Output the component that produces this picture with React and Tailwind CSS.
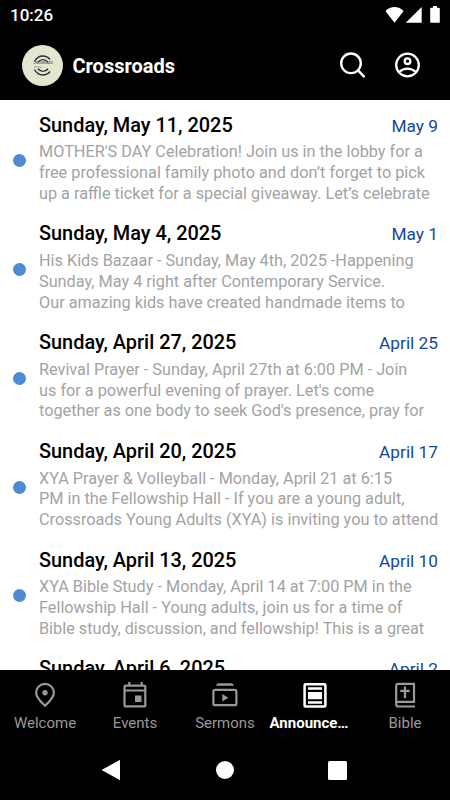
const announcements = [
  {
    title: 'Sunday, May 11, 2025',
    date: 'May 9',
    lines: [
      "MOTHER'S DAY Celebration! Join us in the lobby for a",
      'free professional family photo and don’t forget to pick',
      'up a raffle ticket for a special giveaway. Let’s celebrate',
    ],
  },
  {
    title: 'Sunday, May 4, 2025',
    date: 'May 1',
    lines: [
      'His Kids Bazaar - Sunday, May 4th, 2025 -Happening',
      'Sunday, May 4 right after Contemporary Service.',
      'Our amazing kids have created handmade items to',
    ],
  },
  {
    title: 'Sunday, April 27, 2025',
    date: 'April 25',
    lines: [
      'Revival Prayer - Sunday, April 27th at 6:00 PM - Join',
      "us for a powerful evening of prayer. Let's come",
      "together as one body to seek God's presence, pray for",
    ],
  },
  {
    title: 'Sunday, April 20, 2025',
    date: 'April 17',
    lines: [
      'XYA Prayer & Volleyball - Monday, April 21 at 6:15',
      'PM in the Fellowship Hall - If you are a young adult,',
      'Crossroads Young Adults (XYA) is inviting you to attend',
    ],
  },
  {
    title: 'Sunday, April 13, 2025',
    date: 'April 10',
    lines: [
      'XYA Bible Study - Monday, April 14 at 7:00 PM in the',
      'Fellowship Hall - Young adults, join us for a time of',
      'Bible study, discussion, and fellowship! This is a great',
    ],
  },
  { title: 'Sunday, April 6, 2025', date: 'April 2', lines: [] },
]

function StatusBar() {
  return (
    <div className="flex h-[30px] shrink-0 items-center justify-between px-[10px]">
      <span className="text-[17px] leading-[30px] font-medium">10:26</span>
      <svg width="56" height="30" viewBox="0 0 56 30" fill="currentColor">
        <path d="M1.500 11.200C4 8.400 7 7 10.500 7s6.500 1.400 9 4.200L10.500 22.800z" />
        <path d="M37.700 7v15.800H21.700z" />
        <path d="M49 6h4v1.800h2q.8 0 .8.8v13.400q0 .8-.8.8h-8q-.8 0-.8-.8V8.600q0-.8.8-.8h2z" />
      </svg>
    </div>
  )
}

function Logo() {
  return (
    <div className="relative size-[41px] overflow-hidden rounded-full bg-[#e4e6cf]">
      <svg
        className="size-[41px]"
        viewBox="0 0 41 41"
        fill="none"
        stroke="#2b3038"
        strokeWidth="1.400"
      >
        <path d="M12.500 16.500C14.500 12.800 17.500 11 20.800 11c3 0 5.400 1.300 7.200 3.500M12.500 24.500c2 3.700 5 5.500 8.300 5.500 3 0 5.400-1.300 7.200-3.500" />
        <path d="M16 17.200c1.400-1.800 3-2.600 5-2.600s3.600.9 5 2.700M16 23.800c1.400 1.800 3 2.600 5 2.600s3.600-.9 5-2.700" />
        <path d="M12 22h8" stroke="#8f938e" strokeWidth=".8" />
      </svg>
      <span className="absolute top-[17.500px] left-[11.500px] text-[3px] leading-[3px] font-medium whitespace-nowrap text-[#555a63]">
        CROSSROADS
      </span>
    </div>
  )
}

function Header() {
  return (
    <header className="flex h-[70px] shrink-0 items-center pr-[30px] pl-[22px]">
      <Logo />
      <h1 className="ml-[9.500px] pt-[2px] text-[20px] font-bold">Crossroads</h1>
      <div className="ml-auto flex items-center gap-[30px]">
        <svg width="25" height="26" viewBox="0 0 25 26" fill="none" stroke="currentColor">
          <circle cx="11" cy="11.300" r="9.800" strokeWidth="2.400" />
          <path d="M18.300 18.600l5.500 5.700" strokeWidth="2.600" strokeLinecap="round" />
        </svg>
        <svg width="25" height="26" viewBox="0 0 25 26" fill="none" stroke="currentColor">
          <circle cx="12.500" cy="13" r="11.300" strokeWidth="2.300" />
          <circle cx="12.500" cy="9.200" r="2.800" strokeWidth="2.300" />
          <path d="M4.500 19.800c2.200-2.200 4.900-3.200 8-3.200s5.800 1 8 3.200" strokeWidth="2.200" />
        </svg>
      </div>
    </header>
  )
}

function AnnouncementRow({ title, date, lines }) {
  return (
    <li className="flex h-[108.750px] shrink-0">
      <div className="flex w-[39px] shrink-0 items-center pt-[13px] pl-[13px]">
        <span className="size-[13px] rounded-full bg-[#4d8cd5]" />
      </div>
      <div className="min-w-0 flex-1 pt-[12.600px] pr-[12px]">
        <div className="flex h-[26px] items-baseline justify-between">
          <h2 className="text-[19.900px] leading-[26px] font-medium text-black">{title}</h2>
          <span className="text-[17.300px] leading-[26px] text-[#13499a]">{date}</span>
        </div>
        <p className="mt-[3.700px] text-[16.250px] leading-[20.800px] whitespace-nowrap text-[#a3a3a3]">
          {lines.map((line) => (
            <span key={line} className="block">
              {line}
            </span>
          ))}
        </p>
      </div>
    </li>
  )
}

const tabs = [
  {
    label: 'Welcome',
    icon: (
      <>
        <path d="M14 24.800C8.500 19.800 5.100 16 5.100 11.800a8.900 8.900 0 0 1 17.800 0c0 4.200-3.400 8-8.900 13z" />
        <circle cx="14" cy="11.800" r="2.700" fill="currentColor" stroke="none" />
      </>
    ),
  },
  {
    label: 'Events',
    icon: (
      <>
        <rect x="3.500" y="4.600" width="20.800" height="20.800" rx="1.500" />
        <path d="M3.500 9.500h20.800M8.300 1v4M20.700 1v4" />
        <path d="M14 14.500h6.500v6.500H14z" fill="currentColor" stroke="none" />
      </>
    ),
  },
  {
    label: 'Sermons',
    icon: (
      <>
        <rect x="2.400" y="8.800" width="23" height="15.400" rx="1.800" />
        <path d="M7.500 2.300h13q2 0 2.500 2.500H5q.5-2.500 2.500-2.500z" fill="currentColor" stroke="none" />
        <path d="M11.300 13v7.500l6-3.750z" fill="currentColor" stroke="none" />
      </>
    ),
  },
  {
    label: 'Announce…',
    active: true,
    icon: (
      <>
        <rect x="3.600" y="3.200" width="20.800" height="22.400" rx="1" strokeWidth="2.500" />
        <path
          d="M7 6.200h14v2.600H7zM7 11h14v7.200H7zM7 20.300h14v2.500H7z"
          fill="currentColor"
          stroke="none"
        />
      </>
    ),
  },
  {
    label: 'Bible',
    icon: (
      <>
        <path d="M24 2.900H7.200q-2 0-2 2v18.600q0 2 2 2H24M5.200 20.900H23V2.900" />
        <path d="M14 5.500v11.700M9.300 9.900h9.400" />
      </>
    ),
  },
]

function TabBar() {
  return (
    <nav className="grid h-[70px] shrink-0 grid-cols-5 bg-black">
      {tabs.map((tab) => (
        <button
          key={tab.label}
          type="button"
          className={`flex flex-col items-center pt-[11px] ${
            tab.active ? 'font-bold text-white' : 'text-[#999999]'
          }`}
        >
          <svg
            width="28"
            height="28"
            viewBox="0 0 28 28"
            fill="none"
            stroke="currentColor"
            strokeWidth="2.200"
          >
            {tab.icon}
          </svg>
          <span
            className={`mt-[3.500px] text-[15px] leading-[20px] ${tab.active ? 'mr-[12px]' : ''}`}
          >
            {tab.label}
          </span>
        </button>
      ))}
    </nav>
  )
}

function SystemBar() {
  return (
    <div className="flex h-[60px] shrink-0 items-center bg-black pl-[102px]">
      <svg width="18" height="20" viewBox="0 0 18 20" fill="currentColor">
        <path d="M18 .6v18.800q0 .8-.8.400L.5 10.500q-.8-.5 0-1L17.200.2q.8-.4.8.4z" />
      </svg>
      <span className="ml-[96px] size-[18px] rounded-full bg-white" />
      <span className="ml-[94px] size-[19px] rounded-[1.500px] bg-white" />
    </div>
  )
}

export default function App() {
  return (
    <div className="flex h-[800px] w-[450px] flex-col overflow-hidden bg-black font-['Roboto',sans-serif] text-white">
      <StatusBar />
      <Header />
      <ul className="flex min-h-0 flex-1 flex-col overflow-hidden bg-white">
        {announcements.map((item) => (
          <AnnouncementRow key={item.title} {...item} />
        ))}
      </ul>
      <TabBar />
      <SystemBar />
    </div>
  )
}
